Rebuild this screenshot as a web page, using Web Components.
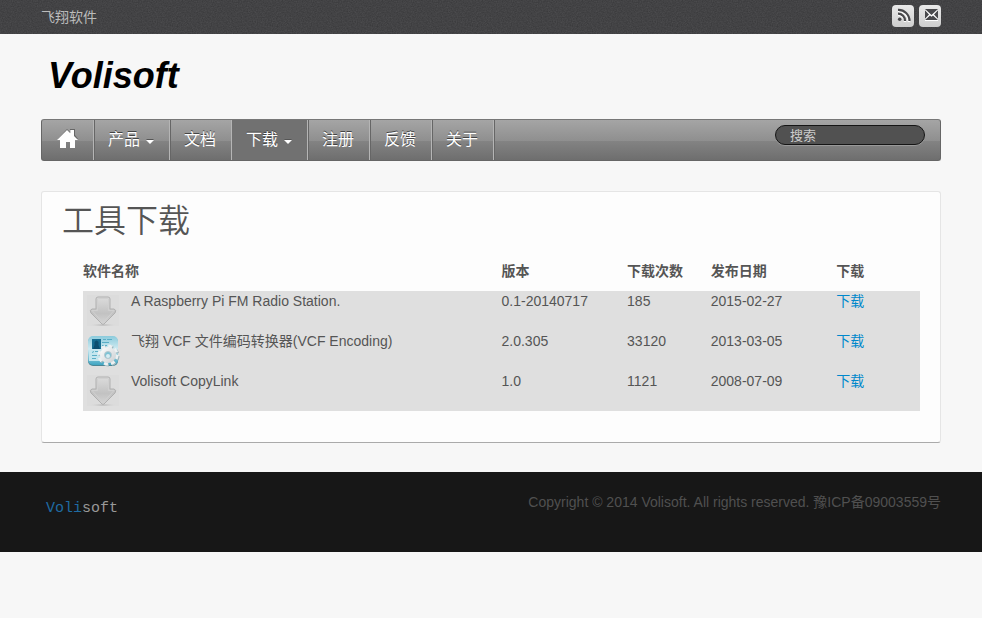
<!DOCTYPE html>
<html lang="zh-CN">
<head>
<meta charset="utf-8">
<title>Volisoft - 工具下载</title>
<style>
body { margin: 0; background: #f7f7f7; color: #555; font: 14px/20px "Liberation Sans", "Noto Sans CJK SC", sans-serif; }
</style>
</head>
<body>
<site-page>
  <top-bar slot="top">飞翔软件</top-bar>
  <site-logo slot="head">Volisoft</site-logo>
  <nav-bar slot="head">
    <nav-item home></nav-item>
    <nav-item menu>产品</nav-item>
    <nav-item>文档</nav-item>
    <nav-item menu active>下载</nav-item>
    <nav-item>注册</nav-item>
    <nav-item>反馈</nav-item>
    <nav-item>关于</nav-item>
    <search-box slot="end"></search-box>
  </nav-bar>
  <content-card slot="main">
    <span slot="title">工具下载</span>
    <download-table></download-table>
  </content-card>
  <site-footer slot="foot">Copyright © 2014 Volisoft. All rights reserved. 豫ICP备09003559号</site-footer>
</site-page>
<script>
function element(name, markup, setup) {
  customElements.define(name, class extends HTMLElement {
    constructor() {
      super();
      const template = document.createElement('template');
      template.innerHTML = markup;
      this.attachShadow({ mode: 'open' }).append(template.content.cloneNode(true));
      if (setup) setup(this, this.shadowRoot);
    }
  });
}

element('site-page', `
<style>
  :host { display: block; }
  .wrap { max-width: 900px; margin: 0 auto; }
  main { padding: 30px 0 29px; }
</style>
<slot name="top"></slot>
<header class="wrap"><slot name="head"></slot></header>
<main class="wrap"><slot name="main"></slot></main>
<slot name="foot"></slot>`);

const grain = encodeURIComponent('<svg xmlns="http://www.w3.org/2000/svg" width="100" height="100"><filter id="n" x="0" y="0" width="100%" height="100%" color-interpolation-filters="sRGB"><feTurbulence type="fractalNoise" baseFrequency=".8" numOctaves="2" stitchTiles="stitch"/><feColorMatrix values=".1 0 0 0 .212 .1 0 0 0 .212 .1 0 0 0 .22 0 0 0 0 1"/></filter><rect width="100" height="100" filter="url(#n)"/></svg>');

element('top-bar', `
<style>
  :host { display: block; background: #424244 url("data:image/svg+xml,${grain}"); color: #bbb; }
  .row { max-width: 900px; height: 34px; margin: 0 auto; display: flex; align-items: center; justify-content: space-between; }
  .icons { display: flex; gap: 5px; padding-bottom: 2px; }
  a { display: block; width: 22px; height: 22px; border-radius: 4px; background: linear-gradient(#e9e9e9, #cecece); }
  svg { display: block; width: 22px; height: 22px; }
</style>
<div class="row"><slot></slot>
  <nav class="icons">
    <a href="#rss" aria-label="RSS"><svg viewBox="0 0 22 22" fill="none"><g stroke="#fff" stroke-width="2.4" transform="translate(0 1)"><path d="M6 8.700A7 7 0 0 1 13 16M6 4.900A11 11 0 0 1 17 16"/></g><g stroke="#48484b" stroke-width="2.200"><path d="M6 8.700A7 7 0 0 1 13 16M6 4.900A11 11 0 0 1 17.500 16"/></g><circle cx="7.700" cy="14.200" r="1.800" fill="#48484b"/></svg></a>
    <a href="#mail" aria-label="Mail"><svg viewBox="0 0 22 22"><path fill="#fff" d="M6 5h13v11H6z"/><path fill="#48484b" d="M6 4h13l-6.500 6zM6 5.200l4 4.400-4 4.200zM19 5.200l-4 4.400 4 4.200zM6 15l5-4.500 1.500 1.300 1.500-1.300 5 4.500z"/></svg></a>
  </nav>
</div>`);

element('site-logo', `
<style>
  :host { display: block; padding: 22px 7px 23px; color: #000; font: italic bold 36px/40px "Liberation Sans", sans-serif; }
</style><slot></slot>`);

element('nav-bar', `
<style>
  :host { display: block; }
  nav { display: flex; height: 40px; border: 1px solid #666; border-top-color: #777; border-radius: 3px; overflow: hidden;
    background: linear-gradient(#a5a5a5, #8f8f8f 52%, #838383 53%, #6e6e6e); }
  .end { flex: 1; display: flex; justify-content: flex-end; padding: 5px 15px 0 0; border-left: 1px solid #666; }
</style>
<nav><slot></slot><div class="end"><slot name="end"></slot></div></nav>`);

element('nav-item', `
<style>
  :host { display: block; border-left: 1px solid #666; border-right: 1px solid #b5b5b5; }
  :host([home]) { border-left: 0; }
  a { box-sizing: border-box; height: 40px; padding: 0 15px 0 13px; display: flex; align-items: center; gap: 6px;
    color: #fff; font-size: 16px; line-height: 40px; text-decoration: none; text-shadow: 0 -1px 0 #444; }
  :host([active]) { border-left-color: #717171; }
  :host([active]) a { background: #717171; }
  i { display: none; border: 4px solid transparent; border-top-color: #fff; border-bottom: 0; margin-top: 4px; filter: drop-shadow(0 -1px 0 #555); }
  :host([menu]) i { display: block; }
  svg { display: none; width: 22px; height: 20px; }
  :host([home]) svg { display: block; }
  :host([home]) a { gap: 0; padding: 0 15px 2px 14px; }
</style>
<a href="#"><svg viewBox="0 0 22 20"><path fill="#666" d="M2 10L11 0l3 3V0h5v6l3 4z"/><path fill="#fff" d="M1 11L11 1l3.300 3.200V1H18v6l4 4h-3v8h-5v-6h-4v6H4v-8z"/></svg><slot></slot><i></i></a>`,
(host, root) => { if (host.hasAttribute('home')) root.querySelector('a').setAttribute('aria-label', '首页'); });

element('search-box', `
<style>
  :host { display: block; }
  input { display: block; box-sizing: border-box; width: 150px; height: 20px; padding: 0 14px; border: 1px solid #151515; border-radius: 10px;
    background: #515151; color: #ccc; font: 13px/18px "Liberation Sans", "Noto Sans CJK SC", sans-serif; box-shadow: 0 1px 0 #999; outline: 0; }
  input::placeholder { color: #ccc; opacity: 1; }
</style>
<input type="search" placeholder="搜索" aria-label="搜索">`);

element('content-card', `
<style>
  :host { display: block; padding: 6px 20px 31px; border: 1px solid #e5e5e5; border-bottom-color: #aaa; border-radius: 3px; background: #fdfdfd; }
  h1 { margin: 0 0 23px; font-family: "Noto Sans CJK SC DemiLight", "Noto Sans CJK SC", sans-serif; font-size: 32px; line-height: 40px; font-weight: 350; }
  .body { padding-left: 21px; }
</style>
<h1><slot name="title"></slot></h1><div class="body"><slot></slot></div>`);

element('tool-icon', `
<style>:host { display: block; width: 40px; height: 40px; } svg { display: block; } .app, :host([app]) .arrow { display: none; } :host([app]) .app { display: block; }</style>
<svg class="arrow" width="40" height="40" viewBox="0 0 40 40">
  <defs><linearGradient id="a" x2="0" y2="1"><stop stop-color="#dcdcdc"/><stop offset=".6" stop-color="#c2c2c2"/><stop offset="1" stop-color="#d6d6d6"/></linearGradient>
  <radialGradient id="s"><stop stop-color="#aaa"/><stop offset="1" stop-color="#ddd" stop-opacity="0"/></radialGradient></defs>
  <path fill="#dcdcdc" d="M4 4h32v31H4z"/><ellipse cx="20" cy="34" rx="14" ry="1.500" fill="url(#s)"/>
  <path fill="url(#a)" stroke="#b0b0b0" stroke-linejoin="round" d="M15 6h10q2 0 2 2v10h4q3 1 1 4L21 33q-1 1-2 0L8 22q-2-3 1-4h4V8q0-2 2-2z"/>
  <path fill="none" stroke="#d0d0d0" d="M14.500 19.500V8q0-.5 1-.5h9q1 0 1 .5v11.500h5.500L20 31.500 9 19.500z"/>
</svg>
<svg class="app" width="40" height="40" viewBox="0 0 40 40">
  <defs><linearGradient id="b" x2="0" y2="1"><stop stop-color="#8bcbdc"/><stop offset=".45" stop-color="#cfeaf1"/><stop offset="1" stop-color="#3fa5c2"/></linearGradient>
  <linearGradient id="g" x2="1" y2="1"><stop stop-color="#fff"/><stop offset="1" stop-color="#c9ced1"/></linearGradient></defs>
  <rect x="5" y="6" width="30" height="29" rx="5" fill="#4b8594"/><rect x="5" y="5" width="30" height="29" rx="5" fill="url(#b)"/>
  <path fill="#c4e6ee" d="M6 19h28v6L20 30H6z"/><path fill="#176d91" d="M9 8h9v10H9z"/><path fill="#0d4f70" d="M11.500 11q2-3 4 0v3l1.500 4H10l1.500-4z"/>
  <path stroke="#5aaec6" fill="none" d="M20 8.500h3m1 0h5M19 11.500h7M19 14.500h5m2 0h3M9 21.500l2-1m1 0h5M9 24.500h5M9 27.500h4"/>
  <circle cx="26" cy="25" r="9" fill="none" stroke="#9db8bf" stroke-width="3" stroke-dasharray="4 3.069"/>
  <circle cx="25" cy="24" r="9" fill="none" stroke="#edf1f2" stroke-width="3" stroke-dasharray="4 3.069"/>
  <circle cx="25" cy="24" r="8" fill="url(#g)"/><circle cx="25" cy="24" r="3.500" fill="#7cc3d5" stroke="#b8c8ce"/><circle cx="25" cy="25" r="2" fill="#d8edf3"/>
</svg>`);

const tools = [
  ['A Raspberry Pi FM Radio Station.', '0.1-20140717', '185', '2015-02-27', ''],
  ['飞翔 VCF 文件编码转换器(VCF Encoding)', '2.0.305', '33120', '2013-03-05', 'app'],
  ['Volisoft CopyLink', '1.0', '1121', '2008-07-09', '']
];

element('download-table', `
<style>
  :host { display: block; }
  table { width: 100%; border-collapse: collapse; table-layout: fixed; }
  th, td { padding: 0; text-align: left; vertical-align: top; }
  th { height: 30px; line-height: 20px; }
  tbody { background: #dfdfdf; }
  td { height: 40px; }
  .name { display: flex; gap: 8px; }
  a { color: #08c; text-decoration: none; }
</style>
<table>
  <colgroup><col style="width:50%"><col style="width:15%"><col style="width:10%"><col style="width:15%"><col style="width:10%"></colgroup>
  <thead><tr><th>软件名称</th><th>版本</th><th>下载次数</th><th>发布日期</th><th>下载</th></tr></thead>
  <tbody>${tools.map(([name, version, count, date, icon]) => `<tr><td><div class="name"><tool-icon ${icon}></tool-icon><span>${name}</span></div></td><td>${version}</td><td>${count}</td><td>${date}</td><td><a href="#">下载</a></td></tr>`).join('')}</tbody>
</table>`);

element('site-footer', `
<style>
  :host { display: block; background: #171717; color: #505050; }
  footer { box-sizing: border-box; max-width: 900px; min-height: 80px; margin: 0 auto; padding: 20px 0; display: flex; justify-content: space-between; }
  a { padding: 7px 5px; color: #999; font: 15px/20px "Liberation Mono", monospace; text-decoration: none; }
  b { color: #1f6ba3; font-weight: 400; }
</style>
<footer><a href="#"><b>Voli</b>soft</a><span><slot></slot></span></footer>`);
</script>
</body>
</html>
